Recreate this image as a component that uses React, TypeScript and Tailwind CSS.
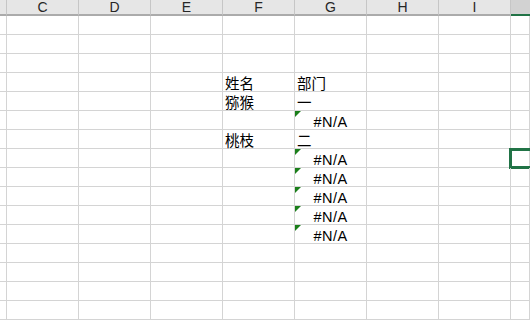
import React from "react";

const cols = ["", "C", "D", "E", "F", "G", "H", "I", ""];

type Cell = { text: string; err?: boolean };

// row number -> { colIndex: cell }
const data: Record<number, Record<number, Cell>> = {
  4: { 4: { text: "姓名" }, 5: { text: "部门" } },
  5: { 4: { text: "猕猴" }, 5: { text: "一" } },
  6: { 5: { text: "#N/A", err: true } },
  7: { 4: { text: "桃枝" }, 5: { text: "二" } },
  8: { 5: { text: "#N/A", err: true } },
  9: { 5: { text: "#N/A", err: true } },
  10: { 5: { text: "#N/A", err: true } },
  11: { 5: { text: "#N/A", err: true } },
  12: { 5: { text: "#N/A", err: true } },
};

const rows = Array.from({ length: 16 }, (_, i) => i + 1);

export default function App() {
  return (
    <div
      lang="zh-CN"
      className="w-[530px] h-[320px] overflow-hidden bg-white font-['Liberation_Sans','Noto_Sans_CJK_SC',sans-serif]"
    >
      <div className="grid grid-cols-[7px_repeat(7,72px)_1fr]">
        {/* column headers */}
        {cols.map((c, i) =>
          i === cols.length - 1 ? (
            <div key={i} className="h-[16px] bg-[#d2d2d2] border-b-2 border-[#217346]" />
          ) : (
            <div
              key={i}
              className="h-[16px] bg-[#e6e6e6] border-r border-b-2 border-r-[#c6c6c6] border-b-[#ababab] flex items-start justify-center text-[14px] leading-[13px] text-[#262626] pt-[1px]"
            >
              {c}
            </div>
          )
        )}

        {rows.map((r) =>
          cols.map((_, ci) => {
            const cell = data[r]?.[ci];
            const selected = r === 8 && ci === cols.length - 1;
            return (
              <div
                key={r + "-" + ci}
                className="relative h-[19px] border-r border-b border-[#d4d4d4] flex items-end px-[2px]"
              >
                {cell && !cell.err && (
                  <span className="text-[14.5px] leading-[17px] text-black font-['Noto_Sans_CJK_SC',sans-serif] whitespace-nowrap">
                    {cell.text}
                  </span>
                )}
                {cell?.err && (
                  <>
                    <span className="absolute left-0 top-0 w-0 h-0 border-t-[6px] border-r-[6px] border-t-[#1a7f1a] border-r-transparent" />
                    <span className="w-full text-center text-[14.5px] leading-[14px] tracking-[0.5px] text-black whitespace-nowrap">
                      {cell.text}
                    </span>
                  </>
                )}
                {selected && (
                  <div className="absolute -left-[2px] -top-[1px] w-[40px] h-[21px] border-[3px] border-[#217346]" />
                )}
              </div>
            );
          })
        )}
      </div>
    </div>
  );
}
